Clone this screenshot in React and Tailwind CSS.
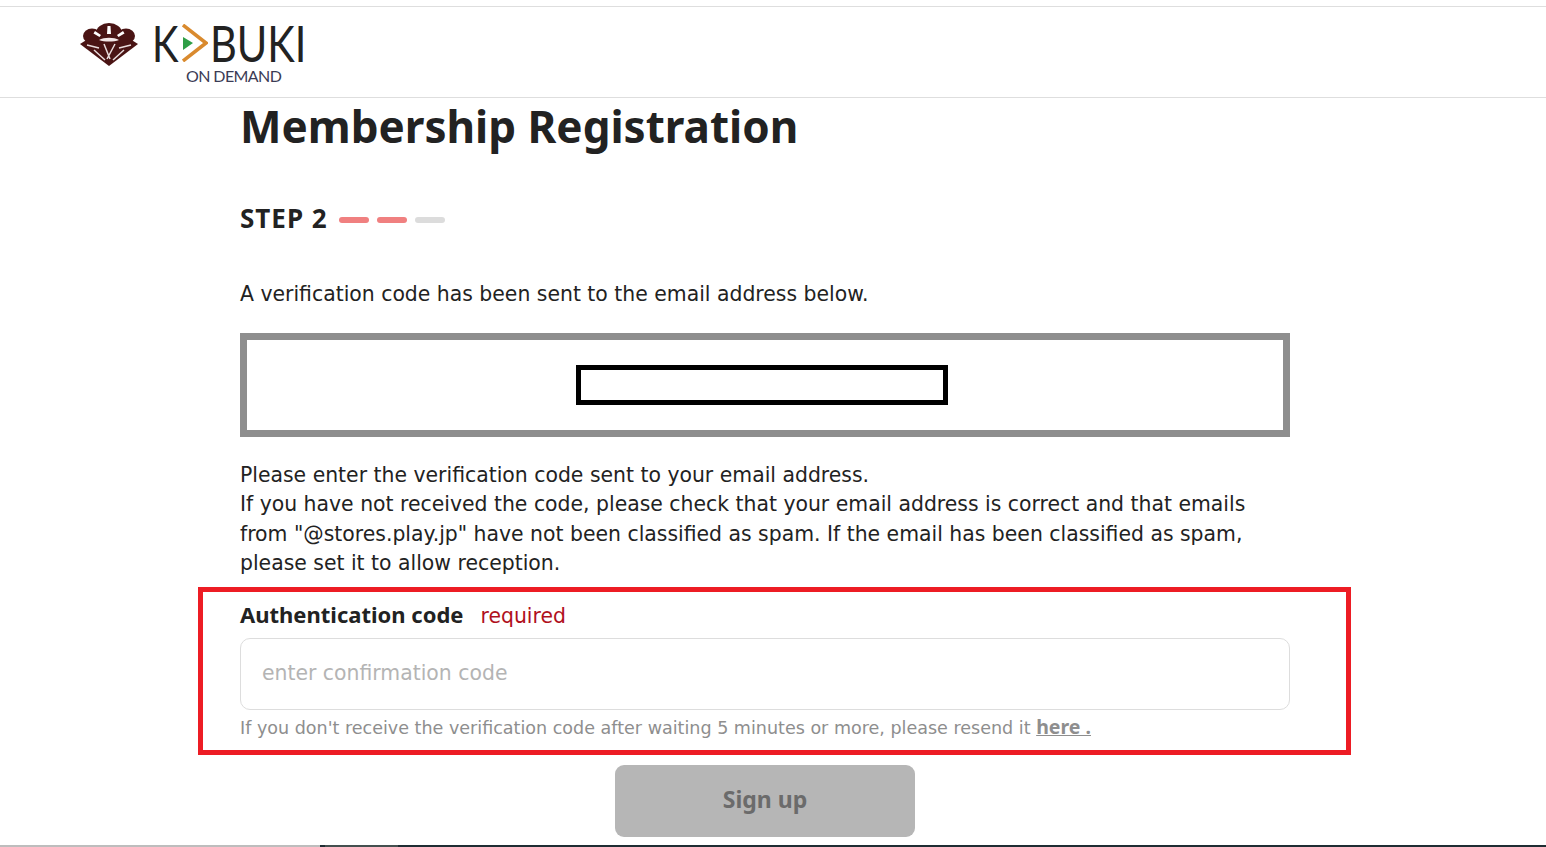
const bodyFont = "font-['DejaVu_Sans',sans-serif]";
const boldFont = "font-['Noto_Sans',sans-serif] font-bold";

function LogoCrest() {
  return (
    <svg width="58" height="43" viewBox="0 0 58 43" className="shrink-0">
      {/* pine crest on a fan */}
      <ellipse cx="12" cy="13" rx="9" ry="7.5" fill="#4a1414" />
      <ellipse cx="46" cy="13" rx="9" ry="7.5" fill="#4a1414" />
      <ellipse cx="29" cy="10" rx="13" ry="10" fill="#4a1414" />
      <path d="M0 21 L8 16 H50 L58 21 L29 43 Z" fill="#4a1414" />
      <path d="M27.5 3 h3 l0.5 8 h-4 Z" fill="#fff" />
      <path d="M15 8 l6 4 -1.5 2 -6 -3.5 Z M43 8 l-6 4 1.5 2 6 -3.5 Z" fill="#fff" />
      <path d="M19 17 C24 14 34 14 39 17 C34 19 24 19 19 17 Z" fill="#f3e6e6" />
      <path
        d="M7 22 L19 25 M51 22 L39 25 M24 21 L30 36 M35 21 L27 36 M14 27 L25 37 M44 27 L33 37"
        stroke="#e9dcdc"
        strokeWidth="1.5"
        fill="none"
      />
    </svg>
  );
}

function Logo() {
  return (
    <div className="flex items-start gap-[14px] pl-[80px] pt-[16px]">
      <LogoCrest />
      <div className="flex flex-col">
        <div className="flex items-center h-[40px] text-[50px] leading-[40px] font-normal text-[#222] font-['Lato',sans-serif]">
          <span className="inline-block w-[26px] origin-left scale-x-[0.8]">K</span>
          <svg width="26" height="38" viewBox="0 0 26 38" className="ml-[4px] mr-[2px] shrink-0">
            <path d="M1 1 L24 19 L1 37" fill="none" stroke="#d98a2e" strokeWidth="3.5" />
            <path d="M1 13 L11 19 L1 26 Z" fill="#2e9e46" />
          </svg>
          <span className="inline-block w-[96px] origin-left scale-x-[0.83]">BUKI</span>
        </div>
        <span className="mt-[4px] ml-[34px] text-[16px] leading-[18px] tracking-[-0.6px] text-[#3b3b55] font-['Lato',sans-serif]">
          ON DEMAND
        </span>
      </div>
    </div>
  );
}

function StepBar({ active }) {
  return (
    <span className={`w-[30px] h-[6px] rounded-full ${active ? 'bg-[#f08080]' : 'bg-[#dcdcdc]'}`}></span>
  );
}

export default function App() {
  return (
    <div className={`h-[847px] overflow-hidden relative bg-white text-[#222] ${bodyFont}`}>
      {/* Header */}
      <header className="mt-[6px] h-[92px] border-y border-[#dedede]">
        <Logo />
      </header>

      <main className="w-[1050px] ml-[240px]">
        <h1 className={`text-[44px] leading-[56px] mt-0 ${boldFont}`}>Membership Registration</h1>

        <div className="flex items-center gap-[11px] mt-[50px] h-[30px]">
          <span className={`text-[26px] tracking-[1px] pb-[2px] ${boldFont}`}>STEP 2</span>
          <div className="flex items-center gap-[8px] mt-[2px]">
            <StepBar active />
            <StepBar active />
            <StepBar />
          </div>
        </div>

        <p className="text-[20.4px] leading-[30px] mt-[45px]">
          A verification code has been sent to the email address below.
        </p>

        <div className="mt-[24px] h-[104px] border-[7px] border-[#8e8e8e] flex items-center justify-center">
          <div className="w-[372px] h-[40px] border-[5px] border-black mr-[6px]"></div>
        </div>

        <p className="text-[20.4px] leading-[29.4px] mt-[23.7px]">
          Please enter the verification code sent to your email address.
          <br />
          If you have not received the code, please check that your email address is correct and that emails from "@stores.play.jp" have not been classified as spam. If the email has been classified as spam, please set it to allow reception.
        </p>

        {/* Highlighted field */}
        <div className="mt-[8.3px] mx-[-42px] w-[1153px] h-[168px] border-[5px] border-[#ed1c24] px-[37px] pt-[9px]">
          <div className="flex items-center gap-[17px] h-[30px]">
            <span className={`text-[22px] text-[#222] pb-[2px] ${boldFont}`}>Authentication code</span>
            <span className="text-[20.4px] text-[#b0101c] pt-[1px]">required</span>
          </div>
          <input
            readOnly
            placeholder="enter confirmation code"
            className="block mt-[7px] w-[1050px] h-[72px] px-[21px] pb-[2px] text-[20.4px] bg-white border border-[#dddddd] rounded-[10px] outline-none placeholder:text-[#b4b4b4]"
          />
          <p className="text-[17.55px] leading-[26px] mt-[4px] text-[#8e8e8e]">
            If you don't receive the verification code after waiting 5 minutes or more, please resend it{' '}
            <a className={`text-[19.5px] underline ${boldFont}`} href="#">here .</a>
          </p>
        </div>

        <button className={`block mx-auto mt-[10px] w-[300px] h-[72px] pb-[2px] rounded-[9px] bg-[#b6b6b6] text-[23px] text-[#6b6b6b] ${boldFont}`}>
          Sign up
        </button>
      </main>

      {/* Window edge at the bottom */}
      <div className="absolute bottom-0 left-0 right-0 h-[2px] flex">
        <div className="w-[320px] bg-[#bdbdbd]"></div>
        <div className="w-[5px] bg-[#1f2d33]"></div>
        <div className="w-[73px] bg-[#44504f]"></div>
        <div className="flex-1 bg-[#1f2d33]"></div>
      </div>
    </div>
  );
}
